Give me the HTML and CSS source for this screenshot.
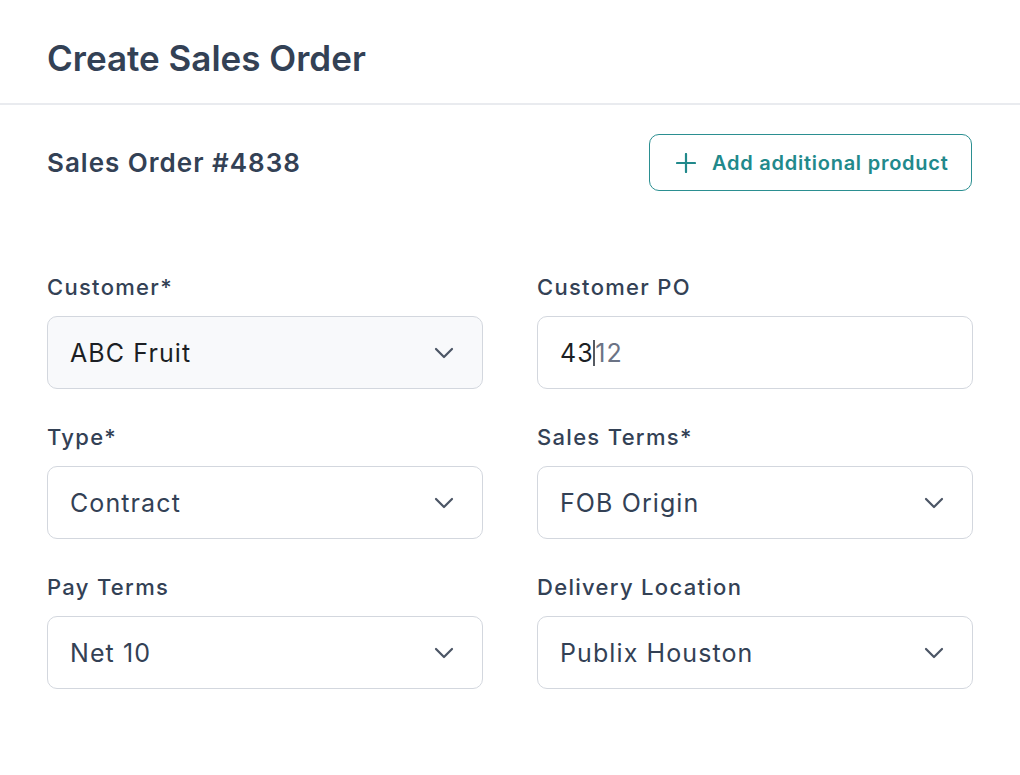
FILE: index.html
```html
<!DOCTYPE html>
<html lang="en">
<head>
<meta charset="utf-8">
<title>Create Sales Order</title>
<link rel="stylesheet" href="styles.css">
</head>
<body>
<header class="page-header">
  <h1 class="page-title">Create Sales Order</h1>
</header>
<main class="content">
  <div class="order-head">
    <h2 class="order-title">Sales Order #4838</h2>
    <button class="add-btn" type="button">
      <svg class="add-icon" viewBox="0 0 20 20" width="20" height="20" aria-hidden="true"><path d="M10 1v18M1 10h18" fill="none" stroke="currentColor" stroke-width="2.2" stroke-linecap="round"/></svg>
      <span>Add additional product</span>
    </button>
  </div>
  <div class="form-grid">
    <div class="field">
      <div class="label">Customer*</div>
      <div class="box box-muted">
        <span class="value value-dark">ABC Fruit</span>
        <svg class="chev" viewBox="0 0 20 12" width="20" height="12" aria-hidden="true"><path d="M2 2l8 8 8-8" fill="none" stroke="currentColor" stroke-width="2.2" stroke-linecap="round" stroke-linejoin="round"/></svg>
      </div>
    </div>
    <div class="field">
      <div class="label">Customer PO</div>
      <div class="box">
        <span class="value value-dark">43</span><span class="caret"></span><span class="value value-ghost">12</span>
      </div>
    </div>
    <div class="field">
      <div class="label">Type*</div>
      <div class="box">
        <span class="value">Contract</span>
        <svg class="chev" viewBox="0 0 20 12" width="20" height="12" aria-hidden="true"><path d="M2 2l8 8 8-8" fill="none" stroke="currentColor" stroke-width="2.2" stroke-linecap="round" stroke-linejoin="round"/></svg>
      </div>
    </div>
    <div class="field">
      <div class="label">Sales Terms*</div>
      <div class="box">
        <span class="value">FOB Origin</span>
        <svg class="chev" viewBox="0 0 20 12" width="20" height="12" aria-hidden="true"><path d="M2 2l8 8 8-8" fill="none" stroke="currentColor" stroke-width="2.2" stroke-linecap="round" stroke-linejoin="round"/></svg>
      </div>
    </div>
    <div class="field">
      <div class="label">Pay Terms</div>
      <div class="box">
        <span class="value">Net 10</span>
        <svg class="chev" viewBox="0 0 20 12" width="20" height="12" aria-hidden="true"><path d="M2 2l8 8 8-8" fill="none" stroke="currentColor" stroke-width="2.2" stroke-linecap="round" stroke-linejoin="round"/></svg>
      </div>
    </div>
    <div class="field">
      <div class="label">Delivery Location</div>
      <div class="box">
        <span class="value">Publix Houston</span>
        <svg class="chev" viewBox="0 0 20 12" width="20" height="12" aria-hidden="true"><path d="M2 2l8 8 8-8" fill="none" stroke="currentColor" stroke-width="2.2" stroke-linecap="round" stroke-linejoin="round"/></svg>
      </div>
    </div>
  </div>
</main>
</body>
</html>
```

FILE: styles.css
```css
* { box-sizing: border-box; }

body {
  margin: 0;
  background: #ffffff;
  font-family: Inter, "Open Sans", sans-serif;
  color: #334155;
}

.page-header {
  height: 105px;
  padding: 12px 47px 0;
  display: flex;
  align-items: center;
  border-bottom: 2px solid #e9ebef;
}

.page-title {
  margin: 0;
  font-size: 35px;
  font-weight: 600;
  color: #334155;
  letter-spacing: 0;
}

.content {
  padding: 29px 47px 0;
}

.order-head {
  display: flex;
  justify-content: space-between;
  align-items: center;
}

.order-title {
  margin: 0;
  font-size: 26px;
  font-weight: 600;
  color: #334155;
  letter-spacing: 1px;
}

.add-btn {
  height: 57px;
  width: 323px;
  margin-right: 1px;
  display: flex;
  align-items: center;
  gap: 16px;
  padding: 0 0 0 26px;
  background: #ffffff;
  border: 1.5px solid #2b8f91;
  border-radius: 10px;
  color: #21898b;
  font-family: inherit;
  font-size: 20px;
  font-weight: 600;
  letter-spacing: 0.75px;
  cursor: pointer;
}

.add-icon { flex: none; }

.form-grid {
  margin-top: 81px;
  display: grid;
  grid-template-columns: 436px 436px;
  column-gap: 54px;
  row-gap: 33px;
}

.label {
  font-size: 22px;
  line-height: 30px;
  margin-bottom: 14px;
  color: #334155;
  font-weight: 500;
  letter-spacing: 1.3px;
}

.box {
  height: 73px;
  display: flex;
  align-items: center;
  padding: 0 28px 0 22px;
  border: 1.5px solid #d3d7de;
  border-radius: 10px;
  background: #ffffff;
}

.box-muted { background: #f8f9fb; }

.value {
  font-size: 25px;
  color: #334155;
  letter-spacing: 1.1px;
}

.value-dark { color: #1c1f24; }
.value-ghost { color: #6b7385; }

.box > .value:first-child { flex: none; }
.box > .chev { margin-left: auto; color: #4b5565; flex: none; }

.caret {
  display: inline-block;
  width: 1.5px;
  height: 26px;
  background: #555a62;
  margin: 0 0.5px 0 -0.5px;
}
```
